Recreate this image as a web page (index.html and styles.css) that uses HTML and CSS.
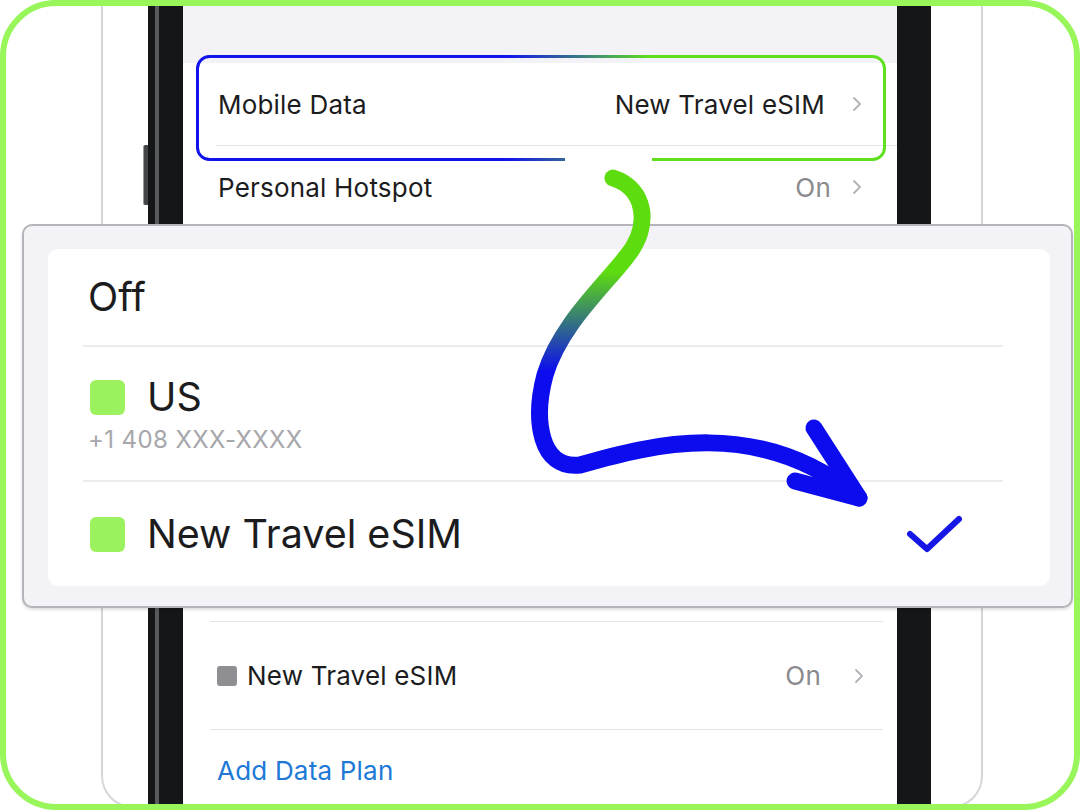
FILE: index.html
```html
<!DOCTYPE html>
<html lang="en">
<head>
  <meta charset="UTF-8">
  <title>Mobile Data – Travel eSIM</title>
  <link rel="stylesheet" href="styles.css">
</head>
<body>
  <div class="frame">
    <div class="case">
      <div class="phone">
        <span class="side-btn"></span>
        <div class="screen">
          <div class="band"></div>
          <div class="group">
            <div class="row">
              <span class="label">Mobile Data</span>
              <span class="value dark">New Travel eSIM</span>
              <svg class="chev" viewBox="0 0 10 16"><polyline points="2,2 8,8 2,14"/></svg>
            </div>
            <div class="sep"></div>
            <div class="row">
              <span class="label">Personal Hotspot</span>
              <span class="value">On</span>
              <svg class="chev" viewBox="0 0 10 16"><polyline points="2,2 8,8 2,14"/></svg>
            </div>
          </div>
          <!-- rows hidden behind the picker -->
          <div class="gap"></div>
          <div class="group lower">
            <div class="sep"></div>
            <div class="row tall">
              <span class="sim-dot"></span>
              <span class="label">New Travel eSIM</span>
              <span class="value">On</span>
              <svg class="chev" viewBox="0 0 10 16"><polyline points="2,2 8,8 2,14"/></svg>
            </div>
            <div class="sep"></div>
            <div class="row link">Add Data Plan</div>
          </div>
        </div>
      </div>
    </div>

    <div class="popup">
      <div class="card">
        <div class="opt opt-off">Off</div>
        <div class="opt-sep"></div>
        <div class="opt opt-us">
          <div class="opt-title"><span class="sim-sq"></span>US</div>
          <div class="opt-sub">+1 408 XXX-XXXX</div>
        </div>
        <div class="opt-sep"></div>
        <div class="opt opt-new">
          <span class="sim-sq"></span>New Travel eSIM
          <svg class="check" viewBox="0 0 60 44"><polyline points="5,22 22,37 54,7"/></svg>
        </div>
      </div>
    </div>

    <svg class="overlay" viewBox="0 0 1080 810">
      <defs>
        <linearGradient id="boxGrad" gradientUnits="userSpaceOnUse" x1="196" y1="0" x2="886" y2="0">
          <stop offset="0.45" stop-color="#1212ec"/>
          <stop offset="0.66" stop-color="#5fe01e"/>
        </linearGradient>
        <linearGradient id="arrowGrad" gradientUnits="userSpaceOnUse" x1="0" y1="272" x2="0" y2="372">
          <stop offset="0" stop-color="#5ddc0f"/>
          <stop offset="1" stop-color="#0c0cef"/>
        </linearGradient>
      </defs>
      <path class="hl-box" d="M565 159.5 H209.5 A12 12 0 0 1 197.5 147.5 V68.5 A12 12 0 0 1 209.5 56.5 H872.5 A12 12 0 0 1 884.5 68.5 V147.5 A12 12 0 0 1 872.5 159.5 H652"/>
      <path class="arrow" d="M613 178 C645 188 652 225 627 256 C605 285 560 325 545 375 C533 420 540 470 580 465 C650 445 760 415 859 498"/>
      <path class="arrow" d="M814 428 L859 498 L795 481"/>
    </svg>
  </div>
</body>
</html>
```

FILE: styles.css
```css
body {
  margin: 0;
  background: #ffffff;
  font-family: Inter, "Noto Sans", sans-serif;
  color: #1c1c1e;
}
.frame {
  position: relative;
  width: 1080px;
  height: 810px;
  box-sizing: border-box;
  border: 6px solid #98f55a;
  border-radius: 56px;
  overflow: hidden;
  background: #ffffff;
  display: flex;
  align-items: flex-start;
  padding-left: 95px;
}
.case {
  width: 882px;
  height: 802px;
  box-sizing: border-box;
  border: 2px solid #d6d6da;
  border-top: none;
  border-radius: 0 0 32px 32px;
  padding-left: 45px;
  display: flex;
}
.phone {
  position: relative;
  width: 783px;
  height: 100%;
  box-sizing: border-box;
  padding: 0 34px 0 35px;
  background: linear-gradient(to right, #141617 0 7px, #575b5d 7px 11px, #141617 11px);
}
.side-btn {
  position: absolute;
  left: -5px;
  top: 139px;
  width: 5px;
  height: 60px;
  border-radius: 2px 0 0 2px;
  background: #44474a;
  border-left: 1px solid #9a9a9e;
  box-sizing: border-box;
}
.screen {
  height: 100%;
  background: #ffffff;
  display: flex;
  flex-direction: column;
}
.band {
  height: 57px;
  background: #f2f2f7;
}
.group {
  background: #ffffff;
}
.row {
  height: 82px;
  display: flex;
  align-items: center;
  padding: 0 35px;
  font-size: 26px;
  letter-spacing: 0.2px;
}
.label {
  flex: 1;
}
.value {
  color: #8a8a8e;
  margin-right: 21px;
}
.value.dark {
  color: #1c1c1e;
  margin-right: 27px;
}
.chev {
  width: 10px;
  height: 16px;
  fill: none;
  stroke: #b2b2b7;
  stroke-width: 1.8;
  stroke-linecap: round;
  stroke-linejoin: round;
}
.sep {
  height: 1px;
  background: #e3e3e8;
  margin-left: 33px;
}
.gap {
  height: 393px;
  background: #ffffff;
}
.lower .sep {
  margin-left: 27px;
  margin-right: 14px;
}
.lower .row {
  padding: 0 33px 0 34px;
}
.lower .value {
  margin-right: 33px;
}
.row.tall {
  height: 107px;
}
.sim-dot {
  width: 20px;
  height: 20px;
  border-radius: 3px;
  background: #8e8e93;
  margin-right: 10px;
}
.row.link {
  height: auto;
  padding-top: 26px;
  line-height: 30px;
  color: #2079d6;
}
.popup {
  position: absolute;
  left: 16px;
  top: 218px;
  width: 1051px;
  height: 384px;
  box-sizing: border-box;
  border: 2px solid #b4b4ba;
  border-radius: 10px;
  background: #f2f2f7;
  padding: 23px 21px 20px 24px;
  box-shadow: 0 2px 3px rgba(0, 0, 0, 0.12);
  display: flex;
}
.card {
  flex: 1;
  background: #ffffff;
  border-radius: 10px;
  display: flex;
  flex-direction: column;
}
.opt {
  padding-left: 40px;
  font-size: 39.5px;
}
.opt-off {
  height: 96px;
  display: flex;
  align-items: center;
}
.opt-sep {
  height: 2px;
  background: #ececf0;
  margin: 0 47px 0 35px;
}
.opt-us {
  height: 133px;
  box-sizing: border-box;
  padding-top: 28px;
}
.opt-title {
  display: flex;
  align-items: center;
  line-height: 44px;
}
.opt-sub {
  margin-top: 6px;
  font-size: 24px;
  letter-spacing: 0.4px;
  line-height: 30px;
  color: #a6a6ab;
}
.opt-new {
  flex: 1;
  display: flex;
  align-items: center;
}
.sim-sq {
  width: 35px;
  height: 35px;
  border-radius: 6px;
  background: #9cf25e;
  margin: 0 22px 0 2px;
}
.check {
  margin-left: auto;
  margin-right: 85px;
  width: 60px;
  height: 44px;
  fill: none;
  stroke: #1616e6;
  stroke-width: 6;
  stroke-linecap: round;
  stroke-linejoin: round;
}
.overlay {
  position: absolute;
  left: -6px;
  top: -6px;
  width: 1080px;
  height: 810px;
  pointer-events: none;
}
.hl-box {
  fill: none;
  stroke: url(#boxGrad);
  stroke-width: 3;
}
.arrow {
  fill: none;
  stroke: url(#arrowGrad);
  stroke-width: 17;
  stroke-linecap: round;
  stroke-linejoin: round;
}
```
